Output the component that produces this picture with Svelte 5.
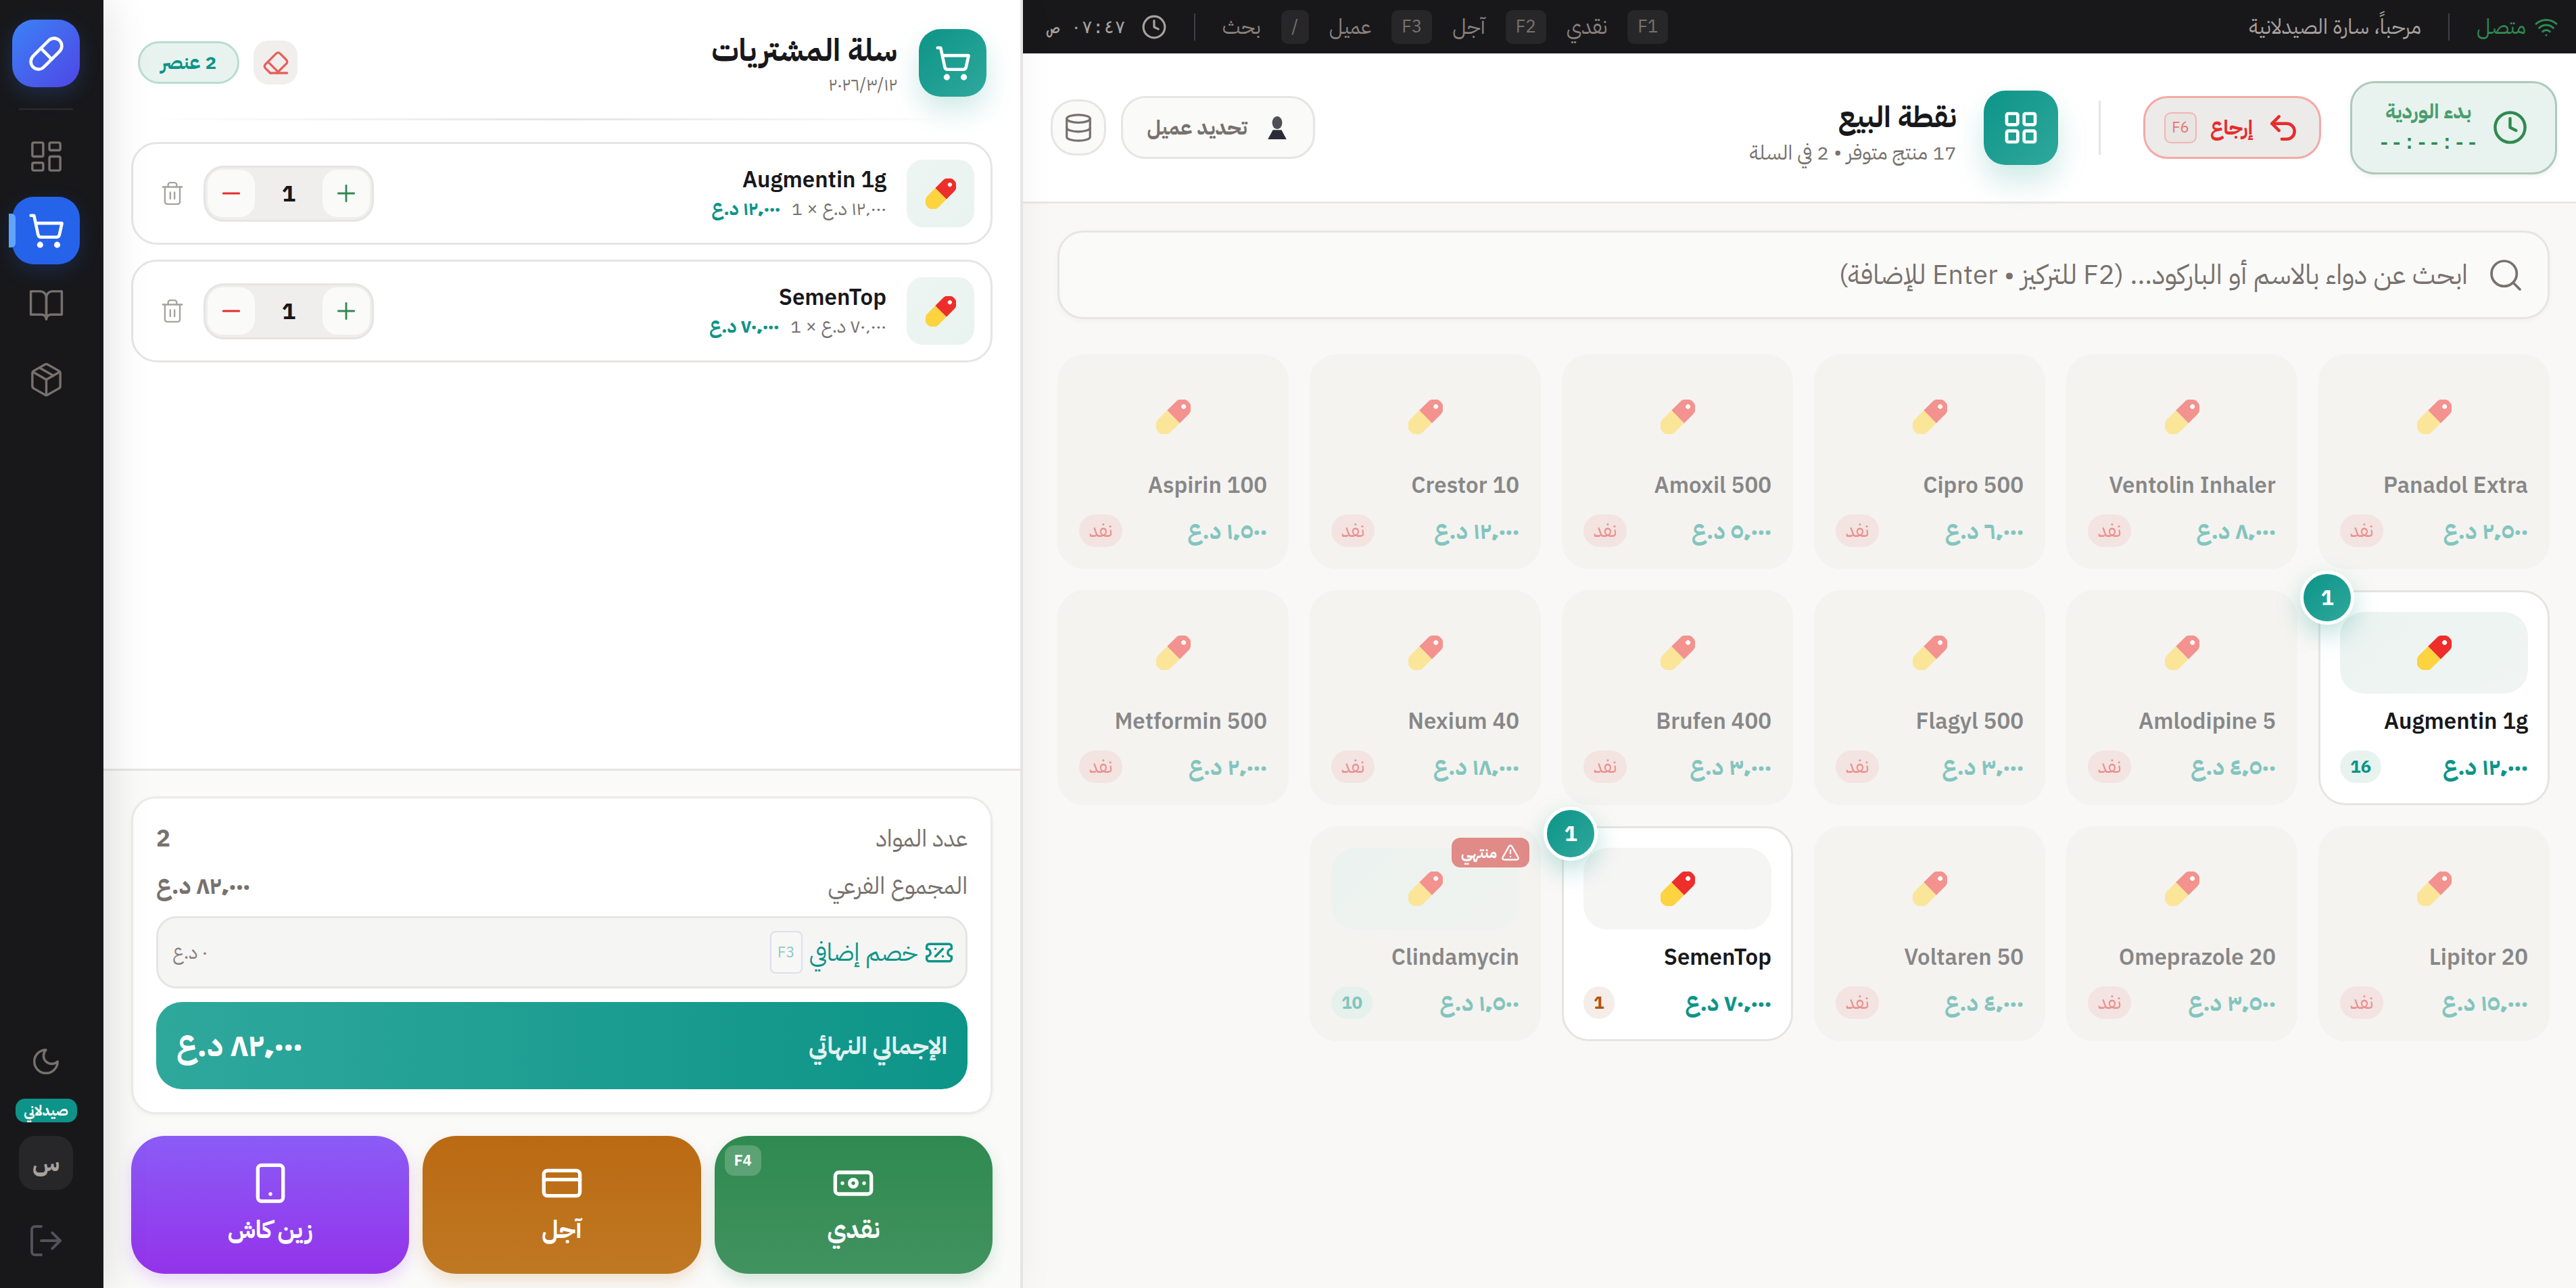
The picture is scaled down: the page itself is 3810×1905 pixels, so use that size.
<script>
  const icons = {
    pill: '<path d="m10.5 20.5 10-10a4.95 4.95 0 1 0-7-7l-10 10a4.95 4.95 0 1 0 7 7Z"/><path d="m8.5 8.5 7 7"/>',
    dashboard: '<rect width="7" height="9" x="3" y="3" rx="1"/><rect width="7" height="5" x="14" y="3" rx="1"/><rect width="7" height="9" x="14" y="12" rx="1"/><rect width="7" height="5" x="3" y="16" rx="1"/>',
    cart: '<circle cx="8" cy="21" r="1"/><circle cx="19" cy="21" r="1"/><path d="M2.05 2.05h2l2.66 12.42a2 2 0 0 0 2 1.58h9.78a2 2 0 0 0 1.95-1.57l1.65-7.43H5.12"/>',
    book: '<path d="M2 3h6a4 4 0 0 1 4 4v14a3 3 0 0 0-3-3H2z"/><path d="M22 3h-6a4 4 0 0 0-4 4v14a3 3 0 0 1 3-3h7z"/>',
    box: '<path d="m7.5 4.27 9 5.15"/><path d="M21 8a2 2 0 0 0-1-1.73l-7-4a2 2 0 0 0-2 0l-7 4A2 2 0 0 0 3 8v8a2 2 0 0 0 1 1.73l7 4a2 2 0 0 0 2 0l7-4A2 2 0 0 0 21 16Z"/><path d="m3.3 7 8.7 5 8.7-5"/><path d="M12 22V12"/>',
    moon: '<path d="M12 3a6 6 0 0 0 9 9 9 9 0 1 1-9-9Z"/>',
    logout: '<path d="M9 21H5a2 2 0 0 1-2-2V5a2 2 0 0 1 2-2h4"/><polyline points="16 17 21 12 16 7"/><line x1="21" x2="9" y1="12" y2="12"/>',
    eraser: '<path d="m7 21-4.3-4.3c-1-1-1-2.5 0-3.4l9.6-9.6c1-1 2.5-1 3.4 0l5.6 5.6c1 1 1 2.5 0 3.4L13 21"/><path d="M22 21H7"/><path d="m5 11 9 9"/>',
    trash: '<path d="M3 6h18"/><path d="M19 6v14c0 1-1 2-2 2H7c-1 0-2-1-2-2V6"/><path d="M8 6V4c0-1 1-2 2-2h4c1 0 2 1 2 2v2"/><line x1="10" x2="10" y1="11" y2="17"/><line x1="14" x2="14" y1="11" y2="17"/>',
    minus: '<path d="M5 12h14"/>',
    plus: '<path d="M5 12h14"/><path d="M12 5v14"/>',
    ticket: '<path d="M2 9a3 3 0 1 1 0 6v2a2 2 0 0 0 2 2h16a2 2 0 0 0 2-2v-2a3 3 0 1 1 0-6V7a2 2 0 0 0-2-2H4a2 2 0 0 0-2 2Z"/><path d="M9 9h.01"/><path d="m15 9-6 6"/><path d="M15 15h.01"/>',
    phone: '<rect width="14" height="20" x="5" y="2" rx="2" ry="2"/><path d="M12 18h.01"/>',
    card: '<rect width="20" height="14" x="2" y="5" rx="2"/><line x1="2" x2="22" y1="10" y2="10"/>',
    cash: '<rect width="20" height="12" x="2" y="6" rx="2"/><circle cx="12" cy="12" r="2"/><path d="M6 12h.01M18 12h.01"/>',
    wifi: '<path d="M12 20h.01"/><path d="M2 8.82a15 15 0 0 1 20 0"/><path d="M5 12.859a10 10 0 0 1 14 0"/><path d="M8.5 16.429a5 5 0 0 1 7 0"/>',
    clock: '<circle cx="12" cy="12" r="10"/><polyline points="12 6 12 12 16 14"/>',
    undo: '<path d="M9 14 4 9l5-5"/><path d="M4 9h10.5a5.5 5.5 0 0 1 5.5 5.5a5.5 5.5 0 0 1-5.5 5.5H11"/>',
    grid: '<rect width="7" height="7" x="3" y="3" rx="1"/><rect width="7" height="7" x="14" y="3" rx="1"/><rect width="7" height="7" x="14" y="14" rx="1"/><rect width="7" height="7" x="3" y="14" rx="1"/>',
    database: '<ellipse cx="12" cy="5" rx="9" ry="3"/><path d="M3 5V19A9 3 0 0 0 21 19V5"/><path d="M3 12A9 3 0 0 0 21 12"/>',
    search: '<circle cx="11" cy="11" r="8"/><path d="m21 21-4.3-4.3"/>',
    alert: '<path d="m21.73 18-8-14a2 2 0 0 0-3.48 0l-8 14A2 2 0 0 0 4 21h16a2 2 0 0 0 1.73-3"/><path d="M12 9v4"/><path d="M12 17h.01"/>'
  };

  const navItems = [
    { icon: "dashboard" },
    { icon: "cart", active: true },
    { icon: "book" },
    { icon: "box" }
  ];

  const hints = [
    ["F1", "نقدي"],
    ["F2", "آجل"],
    ["F3", "عميل"],
    ["/", "بحث"]
  ];

  const cartItems = [
    { name: "Augmentin 1g", price: "١٢٬٠٠٠ د.ع" },
    { name: "SemenTop", price: "٧٠٬٠٠٠ د.ع" }
  ];

  const products = [
    { name: "Panadol Extra", price: "٢٬٥٠٠ د.ع" },
    { name: "Ventolin Inhaler", price: "٨٬٠٠٠ د.ع" },
    { name: "Cipro 500", price: "٦٬٠٠٠ د.ع" },
    { name: "Amoxil 500", price: "٥٬٠٠٠ د.ع" },
    { name: "Crestor 10", price: "١٢٬٠٠٠ د.ع" },
    { name: "Aspirin 100", price: "١٬٥٠٠ د.ع" },
    { name: "Augmentin 1g", price: "١٢٬٠٠٠ د.ع", stock: 16, qty: 1 },
    { name: "Amlodipine 5", price: "٤٬٥٠٠ د.ع" },
    { name: "Flagyl 500", price: "٣٬٠٠٠ د.ع" },
    { name: "Brufen 400", price: "٣٬٠٠٠ د.ع" },
    { name: "Nexium 40", price: "١٨٬٠٠٠ د.ع" },
    { name: "Metformin 500", price: "٢٬٠٠٠ د.ع" },
    { name: "Lipitor 20", price: "١٥٬٠٠٠ د.ع" },
    { name: "Omeprazole 20", price: "٣٬٥٠٠ د.ع" },
    { name: "Voltaren 50", price: "٤٬٠٠٠ د.ع" },
    { name: "SemenTop", price: "٧٠٬٠٠٠ د.ع", stock: 1, qty: 1, low: true },
    { name: "Clindamycin", price: "١٬٥٠٠ د.ع", stock: 10, expired: true }
  ];
</script>

{#snippet icon(name, size, sw = 2)}
  <svg
    width={size}
    height={size}
    viewBox="0 0 24 24"
    fill="none"
    stroke="currentColor"
    stroke-width={sw}
    stroke-linecap="round"
    stroke-linejoin="round">{@html icons[name]}</svg>
{/snippet}

{#snippet capsule(size = 51)}
  <svg class="capsule" width={size} height={size} viewBox="0 0 50 50">
    <g transform="rotate(45 25 25)">
      <path d="M12 25V7a13 13 0 0 1 26 0V25Z" fill="#ee2e2b" />
      <path d="M12 25V43a13 13 0 0 0 26 0V25Z" fill="#fdd33f" />
      <circle cx="25" cy="4" r="3.4" fill="#fff" />
    </g>
  </svg>
{/snippet}

<div class="app" dir="rtl">
  <main class="main">
    <div class="topbar">
      <div class="top-group">
        <span class="online">{@render icon("wifi", 36)}متصل</span>
        <i class="top-sep"></i>
        <span class="welcome">مرحباً، سارة الصيدلانية</span>
      </div>
      <div class="top-group">
        {#each hints as [key, label]}
          <span class="hint"><kbd>{key}</kbd><span>{label}</span></span>
        {/each}
        <i class="top-sep"></i>
        <span class="now">{@render icon("clock", 38)}<span>٠٧:٤٧ ص</span></span>
      </div>
    </div>

    <header class="head">
      <div class="head-right">
        <div class="shift">
          <span class="shift-icon">{@render icon("clock", 53)}</span>
          <div>
            <div class="shift-label">بدء الوردية</div>
            <div class="shift-time" dir="ltr">--:--:--</div>
          </div>
        </div>
        <button class="refund">
          {@render icon("undo", 50, 2.2)}
          <span>إرجاع</span>
          <kbd>F6</kbd>
        </button>
        <i class="head-sep"></i>
        <div class="head-badge">{@render icon("grid", 56)}</div>
        <div class="head-text">
          <h1>نقطة البيع</h1>
          <p>17 منتج متوفر • 2 في السلة</p>
        </div>
      </div>
      <div class="head-left">
        <button class="customer">
          <svg width="36" height="36" viewBox="0 0 34 34">
            <ellipse cx="17" cy="10" rx="7" ry="9" fill="#4f4f59" />
            <path d="M11 20h12l7 13H4Z" fill="#2b2b38" />
          </svg>
          <span>تحديد عميل</span>
        </button>
        <button class="db">{@render icon("database", 46, 1.7)}</button>
      </div>
    </header>

    <section class="content">
      <div class="search">
        {@render icon("search", 56, 1.6)}
        <span>ابحث عن دواء بالاسم أو الباركود... (F2 للتركيز • Enter للإضافة)</span>
      </div>
      <div class="grid">
        {#each products as p}
          <div class="product" class:out={!p.stock} class:expired={p.expired}>
            {#if p.qty}<span class="qty">{p.qty}</span>{/if}
            {#if p.expired}
              <span class="expired-tag">{@render icon("alert", 28)}منتهي</span>
            {/if}
            <div class="thumb" class:grey={p.low}>{@render capsule()}</div>
            <div class="name">{p.name}</div>
            <div class="foot">
              <span class="price">{p.price}</span>
              {#if p.stock}
                <span class="stock" class:low={p.low}>{p.stock}</span>
              {:else}
                <span class="stock none">نفد</span>
              {/if}
            </div>
          </div>
        {/each}
      </div>
    </section>
  </main>

  <aside class="cart">
    <div class="cart-head">
      <div class="cart-title">
        <div class="cart-badge">{@render icon("cart", 55)}</div>
        <div>
          <h2>سلة المشتريات</h2>
          <p>١٢‏/٣‏/٢٠٢٦</p>
        </div>
      </div>
      <div class="cart-tools">
        <button class="clear">{@render icon("eraser", 40)}</button>
        <span class="count">2 عنصر</span>
      </div>
    </div>

    <div class="lines">
      {#each cartItems as item}
        <div class="line">
          <div class="line-thumb">{@render capsule(45)}</div>
          <div class="line-info">
            <div class="line-name">{item.name}</div>
            <div class="line-sub">
              <span>{item.price} × 1</span>
              <b>{item.price}</b>
            </div>
          </div>
          <div class="stepper">
            <button class="plus">{@render icon("plus", 40, 1.7)}</button>
            <span>1</span>
            <button class="minus">{@render icon("minus", 40, 1.9)}</button>
          </div>
          <span class="trash">{@render icon("trash", 38, 1.5)}</span>
        </div>
      {/each}
    </div>

    <div class="cart-foot">
      <div class="summary">
        <div class="row"><span>عدد المواد</span><b>2</b></div>
        <div class="row"><span>المجموع الفرعي</span><b>٨٢٬٠٠٠ د.ع</b></div>
        <div class="discount">
          <span class="discount-label">
            {@render icon("ticket", 44, 1.9)}
            <span>خصم إضافي</span>
            <kbd>F3</kbd>
          </span>
          <span class="discount-value">٠ د.ع</span>
        </div>
        <div class="total">
          <span>الإجمالي النهائي</span>
          <strong>٨٢٬٠٠٠ د.ع</strong>
        </div>
      </div>
      <div class="pay">
        <button class="pay-btn cash">
          <kbd>F4</kbd>
          {@render icon("cash", 64)}
          <span>نقدي</span>
        </button>
        <button class="pay-btn credit">
          {@render icon("card", 64)}
          <span>آجل</span>
        </button>
        <button class="pay-btn zain">
          {@render icon("phone", 64)}
          <span>زين كاش</span>
        </button>
      </div>
    </div>
  </aside>

  <nav class="side">
    <div class="logo">{@render icon("pill", 55)}</div>
    <i class="side-sep"></i>
    {#each navItems as item}
      <div class="nav-item" class:active={item.active}>
        {#if item.active}<i class="marker"></i>{/if}
        {@render icon(item.icon, 55, item.active ? 2 : 1.5)}
      </div>
    {/each}
    <div class="side-bottom">
      <span class="moon">{@render icon("moon", 46, 1.8)}</span>
      <span class="role">صيدلاني</span>
      <div class="avatar">س</div>
      <span class="logout">{@render icon("logout", 56, 1.7)}</span>
    </div>
  </nav>
</div>

<style>
  :global(body) {
    margin: 0;
    background: #f9f8f6;
  }

  .app {
    display: flex;
    width: 3810px;
    height: 1905px;
    overflow: hidden;
    font-family: "IBM Plex Sans Arabic", "Roboto", "Noto Sans Arabic", "Noto Sans", "DejaVu Sans", sans-serif;
    color: #18181b;
  }

  button {
    font: inherit;
    cursor: pointer;
  }

  kbd {
    font: inherit;
  }

  h1,
  h2,
  p {
    margin: 0;
  }

  svg {
    display: block;
    flex: none;
  }

  /* main column */
  .main {
    flex: 1;
    min-width: 0;
    display: flex;
    flex-direction: column;
    background: #f9f8f6;
  }

  .topbar {
    height: 79px;
    flex: none;
    box-sizing: border-box;
    padding: 0 26px 0 38px;
    background: #18181b;
    display: flex;
    align-items: center;
    justify-content: space-between;
    color: #a8a29e;
    font-size: 31px;
  }

  .top-group {
    display: flex;
    align-items: center;
    gap: 30px;
  }

  .online {
    display: flex;
    align-items: center;
    gap: 12px;
    color: #2f8a50;
  }

  .top-sep {
    width: 2px;
    height: 40px;
    margin: 0 10px;
    background: #3f3f46;
  }

  .hint {
    display: flex;
    align-items: center;
    gap: 30px;
    color: #8a817c;
    font-size: 31px;
  }

  .hint kbd {
    min-width: 41px;
    height: 50px;
    padding: 0 15px;
    box-sizing: border-box;
    border-radius: 10px;
    background: #27272a;
    display: flex;
    align-items: center;
    justify-content: center;
    font-size: 26px;
    color: #78716c;
  }

  .now {
    display: flex;
    align-items: center;
    gap: 23px;
    font-family: "DejaVu Sans Mono", "Liberation Mono", monospace;
    font-size: 27px;
    color: #a8a29e;
  }

  .head {
    height: 222px;
    flex: none;
    box-sizing: border-box;
    background: #fff;
    border-bottom: 3px solid #e9e7e4;
    display: flex;
    align-items: center;
    justify-content: space-between;
    padding: 0 28px 0 41px;
  }

  .head-right {
    display: flex;
    align-items: center;
  }

  .shift {
    width: 306px;
    height: 138px;
    box-sizing: border-box;
    background: #e8f3ef;
    border: 3px solid #aec9bd;
    border-radius: 36px;
    display: flex;
    align-items: center;
    gap: 20px;
    padding: 0 40px 6px 0;
    box-shadow: 0 3px 8px rgba(0, 0, 0, 0.06);
    margin-left: 43px;
  }

  .shift-icon {
    color: #2f8a50;
    margin-top: 6px;
  }

  .shift-label {
    font-size: 30px;
    font-weight: 700;
    color: #4b9d6c;
    text-align: center;
  }

  .shift-time {
    font-family: "Liberation Mono", monospace;
    font-size: 30px;
    font-weight: 700;
    color: #2f8a50;
    letter-spacing: 0.6px;
    margin-top: 8px;
  }

  .refund {
    width: 263px;
    height: 93px;
    box-sizing: border-box;
    background: #ecebe9;
    border: 3px solid #f4a9a6;
    border-radius: 36px;
    color: #e62c2c;
    display: flex;
    align-items: center;
    gap: 20px;
    padding: 0 28px;
    font-size: 30px;
    font-weight: 700;
    margin-left: 63px;
  }

  .refund kbd {
    width: 48px;
    height: 46px;
    box-sizing: border-box;
    border: 2px solid #f0b5b3;
    background: #e8e5e2;
    border-radius: 10px;
    color: #e57373;
    font-size: 22px;
    font-weight: 400;
    display: flex;
    align-items: center;
    justify-content: center;
  }

  .head-sep {
    width: 3px;
    height: 80px;
    background: #e7e5e4;
    margin-left: 60px;
  }

  .head-badge {
    width: 110px;
    height: 110px;
    border-radius: 32px;
    background: linear-gradient(135deg, #0d9488, #2fa89c);
    box-shadow: 0 24px 44px rgba(13, 148, 136, 0.2);
    color: #fff;
    display: flex;
    align-items: center;
    justify-content: center;
    margin-left: 40px;
  }

  .head-text {
    padding-top: 14px;
  }

  h1 {
    font-size: 43px;
    font-weight: 700;
    line-height: 60px;
  }

  .head p {
    font-size: 30px;
    color: #78716c;
    line-height: 44px;
  }

  .head-left {
    display: flex;
    align-items: center;
    gap: 22px;
  }

  .customer {
    width: 287px;
    height: 93px;
    box-sizing: border-box;
    background: #fafaf9;
    border: 3px solid #e7e5e4;
    border-radius: 36px;
    display: flex;
    align-items: center;
    justify-content: center;
    gap: 26px;
    color: #78716c;
    font-size: 30px;
    font-weight: 700;
  }

  .db {
    width: 82px;
    height: 83px;
    box-sizing: border-box;
    background: #fafaf9;
    border: 3px solid #e7e5e4;
    border-radius: 36px;
    color: #78716c;
    display: flex;
    align-items: center;
    justify-content: center;
    padding: 0;
  }

  .content {
    flex: 1;
    padding: 40px 39px 0 51px;
  }

  .search {
    height: 131px;
    box-sizing: border-box;
    background: #fafaf9;
    border: 3px solid #e7e5e4;
    border-radius: 38px;
    display: flex;
    align-items: center;
    gap: 28px;
    padding: 0 34px;
    color: #78716c;
    font-size: 40px;
    box-shadow: 0 3px 8px rgba(0, 0, 0, 0.03);
  }

  .grid {
    display: grid;
    grid-template-columns: repeat(6, 342px);
    grid-auto-rows: 318px;
    gap: 31px;
    margin-top: 52px;
  }

  .product {
    position: relative;
    box-sizing: border-box;
    background: #fff;
    border: 3px solid #e5e4e2;
    border-radius: 40px;
    padding: 29px;
    display: flex;
    flex-direction: column;
  }

  .product.out,
  .product.expired {
    opacity: 0.5;
    background: #f1f0ec;
    border-color: transparent;
  }

  .thumb {
    height: 121px;
    flex: none;
    border-radius: 36px;
    background: linear-gradient(135deg, #ebf3f0, #f0f5f3);
    display: flex;
    align-items: center;
    justify-content: center;
  }

  .thumb.grey {
    background: #f5f5f4;
  }

  .product.out .thumb {
    background: transparent;
  }

  .product.expired .thumb {
    background: linear-gradient(135deg, #dfeee9, #e8efec);
  }

  .name {
    margin-top: 21px;
    font-size: 33px;
    font-weight: 600;
    line-height: 40px;
  }

  .foot {
    display: flex;
    align-items: center;
    justify-content: space-between;
    margin-top: auto;
    height: 48px;
    margin-bottom: 1px;
  }

  .price {
    font-size: 34px;
    font-weight: 700;
    color: #0d9488;
  }

  .stock {
    min-width: 30px;
    height: 48px;
    box-sizing: border-box;
    padding: 0 15px;
    border-radius: 24px;
    background: #e8f3ef;
    color: #0d9488;
    font-size: 26px;
    font-weight: 700;
    display: flex;
    align-items: center;
    justify-content: center;
  }

  .stock.low {
    background: #f5ede9;
    color: #b45309;
  }

  .product.expired .stock {
    background: #d5eae4;
  }

  .stock.none {
    min-width: 64px;
    background: #eed0cd;
    color: #dc2626;
    font-size: 28px;
    font-weight: 400;
  }

  .qty {
    position: absolute;
    top: -32px;
    left: -30px;
    width: 70px;
    height: 70px;
    border-radius: 50%;
    box-sizing: content-box;
    border: 5px solid #fff;
    background: linear-gradient(135deg, #0d9488, #2fa89c);
    color: #fff;
    font-size: 32px;
    font-weight: 700;
    display: flex;
    align-items: center;
    justify-content: center;
    box-shadow: 0 14px 36px rgba(13, 148, 136, 0.28);
    z-index: 2;
  }

  .expired-tag {
    position: absolute;
    top: 14px;
    right: 14px;
    width: 115px;
    height: 44px;
    border-radius: 13px;
    background: #c8201c;
    color: #fff;
    font-size: 22px;
    font-weight: 700;
    display: flex;
    align-items: center;
    justify-content: center;
    gap: 6px;
    z-index: 1;
  }

  /* cart panel */
  .cart {
    width: 1360px;
    flex: none;
    box-sizing: border-box;
    border-right: 4px solid #e7e5e4;
    background: #fff;
    display: flex;
    flex-direction: column;
    box-shadow: 0 0 50px rgba(0, 0, 0, 0.05);
    position: relative;
    z-index: 2;
  }

  .cart-head {
    height: 178px;
    flex: none;
    box-sizing: border-box;
    padding: 43px 50px 0 51px;
    display: flex;
    justify-content: space-between;
    align-items: flex-start;
    position: relative;
  }

  .cart-head::after {
    content: "";
    position: absolute;
    left: 60px;
    right: 60px;
    bottom: 0;
    height: 3px;
    background: linear-gradient(to left, transparent, #e7e5e4 50%, transparent);
  }

  .cart-title {
    display: flex;
    align-items: flex-start;
    gap: 32px;
  }

  .cart-badge {
    width: 100px;
    height: 100px;
    border-radius: 32px;
    background: linear-gradient(135deg, #0d9488, #2fa89c);
    box-shadow: 0 20px 40px rgba(13, 148, 136, 0.2);
    color: #fff;
    display: flex;
    align-items: center;
    justify-content: center;
  }

  h2 {
    font-size: 45.5px;
    font-weight: 700;
    line-height: 52px;
    margin-top: 6px;
  }

  .cart-title p {
    font-size: 26px;
    color: #78716c;
    line-height: 30px;
    margin-top: 10px;
  }

  .cart-tools {
    display: flex;
    align-items: center;
    gap: 21px;
    margin-top: 17px;
  }

  .clear {
    width: 65px;
    height: 65px;
    padding: 0;
    border: none;
    border-radius: 22px;
    background: #f0efed;
    color: #e5605c;
    display: flex;
    align-items: center;
    justify-content: center;
  }

  .count {
    width: 150px;
    height: 63px;
    box-sizing: border-box;
    border: 3px solid #b9dcd2;
    border-radius: 32px;
    background: #e8f3ef;
    color: #0d9488;
    font-size: 28px;
    font-weight: 700;
    display: flex;
    align-items: center;
    justify-content: center;
  }

  .lines {
    flex: 1;
    min-height: 0;
    box-sizing: border-box;
    padding: 32px 41px 0;
    display: flex;
    flex-direction: column;
    gap: 22px;
  }

  .line {
    height: 152px;
    box-sizing: border-box;
    border: 3px solid #e7e5e4;
    border-radius: 38px;
    padding: 0 24px;
    display: flex;
    align-items: center;
    gap: 30px;
  }

  .line-thumb {
    width: 100px;
    height: 100px;
    flex: none;
    border-radius: 24px;
    background: linear-gradient(135deg, #eef5f2, #e8f3ef);
    display: flex;
    align-items: center;
    justify-content: center;
  }

  .line-info {
    flex: 1;
    min-width: 0;
  }

  .line-name {
    font-size: 33px;
    font-weight: 600;
    line-height: 46px;
  }

  .line-sub {
    display: flex;
    gap: 16px;
    font-size: 27.5px;
    color: #78716c;
    line-height: 40px;
  }

  .line-sub b {
    color: #0d9488;
    font-weight: 700;
  }

  .stepper {
    width: 252px;
    height: 83px;
    box-sizing: border-box;
    background: #efeeec;
    border: 3px solid #e7e5e4;
    border-radius: 30px;
    padding: 0 3px;
    display: flex;
    align-items: center;
    justify-content: space-between;
    font-size: 34px;
    font-weight: 700;
  }

  .stepper button {
    width: 70px;
    height: 70px;
    padding: 0;
    border: none;
    border-radius: 22px;
    background: #fafaf9;
    display: flex;
    align-items: center;
    justify-content: center;
  }

  .plus {
    color: #2f8a50;
  }

  .minus {
    color: #e62c2c;
  }

  .trash {
    color: #a8a29e;
    margin-left: 15px;
    margin-right: -3px;
  }

  .cart-foot {
    flex: none;
    box-sizing: border-box;
    height: 768px;
    background: #fafaf9;
    border-top: 3px solid #e7e5e4;
    padding: 38px 41px 0;
  }

  .summary {
    height: 470px;
    box-sizing: border-box;
    background: #fff;
    border: 3px solid #ecebe9;
    border-radius: 36px;
    padding: 34px;
    box-shadow: 0 2px 6px rgba(0, 0, 0, 0.04);
    display: flex;
    flex-direction: column;
    gap: 20px;
  }

  .row {
    height: 50px;
    flex: none;
    display: flex;
    align-items: center;
    justify-content: space-between;
    font-size: 35px;
    color: #78716c;
  }

  .row b {
    font-weight: 700;
  }

  .discount {
    height: 107px;
    flex: none;
    box-sizing: border-box;
    background: #f5f5f4;
    border: 3px solid #e7e5e4;
    border-radius: 30px;
    padding: 0 17px 0 21px;
    display: flex;
    align-items: center;
    justify-content: space-between;
  }

  .discount-label {
    display: flex;
    align-items: center;
    gap: 10px;
    color: #0d9488;
    font-size: 36px;
  }

  .discount-label kbd {
    width: 48px;
    height: 63px;
    box-sizing: border-box;
    border: 2px solid #dfdcef;
    border-radius: 8px;
    background: #f7f7f6;
    color: #8fccc4;
    font-size: 22px;
    display: flex;
    align-items: center;
    justify-content: center;
  }

  .discount-value {
    color: #8a817c;
    font-size: 28px;
  }

  .total {
    height: 129px;
    flex: none;
    box-sizing: border-box;
    border-radius: 38px;
    background: linear-gradient(to left, #0d9488, #2fa89c);
    color: #fff;
    padding: 0 30px;
    display: flex;
    align-items: center;
    justify-content: space-between;
  }

  .total span {
    font-size: 35.5px;
    font-weight: 700;
    color: rgba(255, 255, 255, 0.88);
  }

  .total strong {
    font-size: 47px;
    font-weight: 700;
  }

  .pay {
    display: grid;
    grid-template-columns: repeat(3, 1fr);
    gap: 20px;
    margin-top: 32px;
    height: 204px;
  }

  .pay-btn {
    position: relative;
    border: none;
    border-radius: 50px;
    color: #fff;
    font-size: 36px;
    font-weight: 700;
    display: flex;
    flex-direction: column;
    align-items: center;
    justify-content: center;
    gap: 10px;
    padding: 0;
  }

  .pay-btn kbd {
    position: absolute;
    top: 14px;
    left: 15px;
    width: 54px;
    height: 45px;
    border-radius: 14px;
    background: rgba(255, 255, 255, 0.2);
    font-size: 22px;
    font-weight: 700;
    display: flex;
    align-items: center;
    justify-content: center;
  }

  .cash {
    background: linear-gradient(#2f8a50, #41925f);
    box-shadow: 0 10px 22px rgba(47, 138, 80, 0.18);
  }

  .credit {
    background: linear-gradient(#ba6a13, #c07822);
    box-shadow: 0 10px 22px rgba(186, 106, 19, 0.18);
  }

  .zain {
    background: linear-gradient(#8b5cf6, #9333ea);
    box-shadow: 0 10px 22px rgba(147, 51, 234, 0.18);
  }

  /* sidebar */
  .side {
    width: 153px;
    flex: none;
    background: #18181b;
    display: flex;
    flex-direction: column;
    align-items: center;
    padding: 29px 17px 0 0;
    box-sizing: border-box;
    box-shadow: 0 0 70px rgba(0, 0, 0, 0.14);
    position: relative;
    z-index: 3;
  }

  .logo {
    width: 100px;
    height: 100px;
    border-radius: 32px;
    background: linear-gradient(135deg, #3b82f6, #4f46e5);
    box-shadow: 0 10px 30px rgba(59, 130, 246, 0.2);
    color: #fff;
    display: flex;
    align-items: center;
    justify-content: center;
  }

  .side-sep {
    width: 80px;
    height: 3px;
    background: #27272a;
    margin: 31px 0 18px;
  }

  .nav-item {
    position: relative;
    width: 100px;
    height: 100px;
    margin-bottom: 10px;
    border-radius: 32px;
    color: #78716c;
    display: flex;
    align-items: center;
    justify-content: center;
  }

  .nav-item.active {
    background: #2563eb;
    color: #fff;
    box-shadow: 0 10px 30px rgba(37, 99, 235, 0.2);
  }

  .marker {
    position: absolute;
    left: -5px;
    top: 25px;
    width: 10px;
    height: 50px;
    border-radius: 0 6px 6px 0;
    background: #60a5fa;
  }

  .side-bottom {
    margin-top: auto;
    display: flex;
    flex-direction: column;
    align-items: center;
    padding-bottom: 42px;
  }

  .moon {
    color: #78716c;
  }

  .role {
    width: 91px;
    height: 35px;
    margin-top: 32px;
    border-radius: 14px;
    background: #0d9488;
    color: #fff;
    font-size: 21px;
    font-weight: 700;
    display: flex;
    align-items: center;
    justify-content: center;
  }

  .avatar {
    width: 80px;
    height: 80px;
    margin-top: 20px;
    border-radius: 24px;
    background: #27272a;
    color: #a8a29e;
    font-size: 35px;
    font-weight: 700;
    display: flex;
    align-items: center;
    justify-content: center;
  }

  .logout {
    margin-top: 47px;
    color: #52525b;
  }
</style>
